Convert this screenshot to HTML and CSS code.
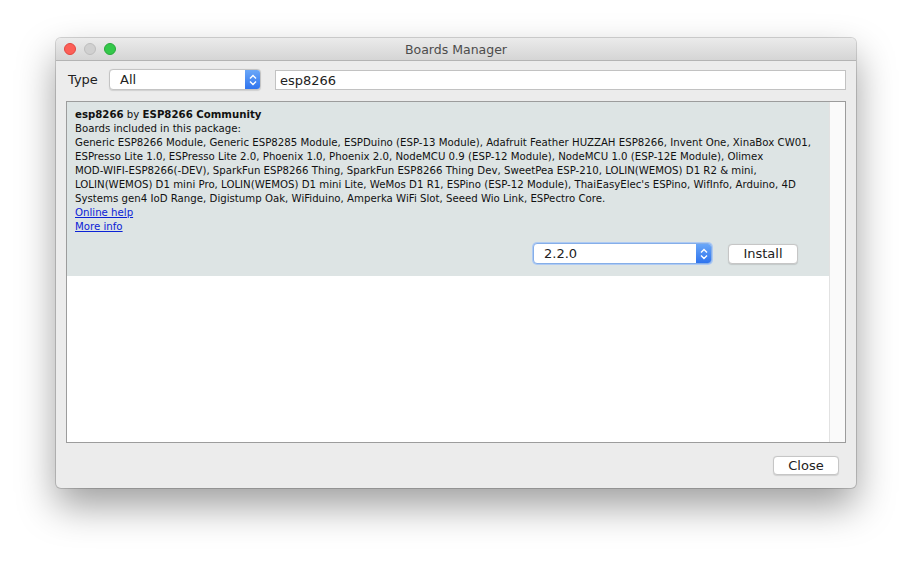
FILE: index.html
```html
<!DOCTYPE html>
<html>
<head>
<meta charset="utf-8">
<link rel="stylesheet" href="styles.css">
</head>
<body>
<div class="desk">
  <div class="window">
    <div class="titlebar">
      <div class="lights">
        <span class="light red"></span>
        <span class="light grey"></span>
        <span class="light green"></span>
      </div>
      <div class="title">Boards Manager</div>
    </div>
    <div class="filter">
      <span class="type-label">Type</span>
      <div class="select type-select">
        <span class="select-text">All</span>
        <span class="stepper"><svg width="10" height="14" viewBox="0 0 10 14"><path d="M2 5.5 L5 2.5 L8 5.5 M2 8.5 L5 11.5 L8 8.5" fill="none" stroke="#fff" stroke-width="1.4"/></svg></span>
      </div>
      <div class="search">esp8266</div>
    </div>
    <div class="list">
      <div class="list-inner">
        <div class="item">
          <div class="line"><b>esp8266</b> by <b>ESP8266 Community</b></div>
          <div class="line">Boards included in this package:</div>
          <div class="boards">Generic ESP8266 Module, Generic ESP8285 Module, ESPDuino (ESP-13 Module), Adafruit Feather HUZZAH ESP8266, Invent One, XinaBox CW01,<br>ESPresso Lite 1.0, ESPresso Lite 2.0, Phoenix 1.0, Phoenix 2.0, NodeMCU 0.9 (ESP-12 Module), NodeMCU 1.0 (ESP-12E Module), Olimex<br>MOD-WIFI-ESP8266(-DEV), SparkFun ESP8266 Thing, SparkFun ESP8266 Thing Dev, SweetPea ESP-210, LOLIN(WEMOS) D1 R2 &amp; mini,<br>LOLIN(WEMOS) D1 mini Pro, LOLIN(WEMOS) D1 mini Lite, WeMos D1 R1, ESPino (ESP-12 Module), ThaiEasyElec's ESPino, WifInfo, Arduino, 4D<br>Systems gen4 IoD Range, Digistump Oak, WiFiduino, Amperka WiFi Slot, Seeed Wio Link, ESPectro Core.</div>
          <div class="line"><a href="#">Online help</a></div>
          <div class="line"><a href="#">More info</a></div>
          <div class="actions">
            <div class="select version-select">
              <span class="select-text">2.2.0</span>
              <span class="stepper"><svg width="10" height="14" viewBox="0 0 10 14"><path d="M2 5.5 L5 2.5 L8 5.5 M2 8.5 L5 11.5 L8 8.5" fill="none" stroke="#fff" stroke-width="1.4"/></svg></span>
            </div>
            <button class="btn install">Install</button>
          </div>
        </div>
      </div>
      <div class="scroll"></div>
    </div>
    <div class="footer">
      <button class="btn close">Close</button>
    </div>
  </div>
</div>
</body>
</html>
```

FILE: styles.css
```css
html, body {
  margin: 0;
  padding: 0;
  background: #ffffff;
  font-family: "DejaVu Sans", "Liberation Sans", sans-serif;
}
.desk {
  padding: 38px 0 74px 56px;
}
.window {
  width: 800px;
  height: 450px;
  background: #ececec;
  border-radius: 5px;
  box-shadow: 0 0 0 1px rgba(0,0,0,0.16), 0 18px 38px rgba(0,0,0,0.38);
  display: flex;
  flex-direction: column;
  overflow: hidden;
}
.titlebar {
  height: 22px;
  flex: none;
  background: linear-gradient(#ebebeb, #d5d5d5);
  border-bottom: 1px solid #b4b4b4;
  display: flex;
  align-items: center;
  position: relative;
}
.lights {
  display: flex;
  gap: 8px;
  padding-left: 8px;
}
.light {
  width: 12px;
  height: 12px;
  border-radius: 50%;
  box-sizing: border-box;
}
.red { background: #fc5f57; border: 0.5px solid #e2463f; }
.grey { background: #d0d0d0; border: 0.5px solid #bdbdbd; }
.green { background: #34c84a; border: 0.5px solid #28a83b; }
.title {
  position: absolute;
  left: 0;
  right: 0;
  text-align: center;
  font-size: 12.5px;
  color: #4c4c4c;
  pointer-events: none;
}
.filter {
  height: 40px;
  flex: none;
  display: flex;
  align-items: flex-start;
  padding: 0 10px 0 12px;
  box-sizing: border-box;
}
.type-label {
  font-size: 13px;
  color: #222;
  width: 41px;
  margin-top: 11px;
}
.select {
  display: flex;
  align-items: center;
  background: #fff;
  border: 1px solid #c4c4c4;
  border-radius: 4px;
  box-sizing: border-box;
  overflow: hidden;
  box-shadow: 0 0.5px 1px rgba(0,0,0,0.12);
}
.type-select {
  width: 152px;
  height: 21px;
  margin-top: 8px;
}
.select-text {
  flex: 1;
  font-size: 13px;
  color: #222;
  padding-left: 10px;
}
.stepper {
  width: 15px;
  align-self: stretch;
  background: linear-gradient(#6aa7f8, #2f74ee);
  display: flex;
  align-items: center;
  justify-content: center;
}
.search {
  margin: 9px 0 0 14px;
  flex: 1;
  height: 20px;
  background: #fff;
  border: 1px solid #c2c2c2;
  box-sizing: border-box;
  font-size: 13px;
  color: #222;
  padding-left: 4px;
  line-height: 19px;
}
.list {
  margin: 0 10px;
  height: 342px;
  flex: none;
  border: 1px solid #9c9c9c;
  box-sizing: border-box;
  background: #fff;
  display: flex;
}
.list-inner {
  flex: 1;
  min-width: 0;
  overflow: hidden;
}
.scroll {
  width: 15px;
  flex: none;
  background: #fafafa;
  border-left: 1px solid #e2e2e2;
}
.item {
  background: #dde4e4;
  height: 174px;
  padding: 6px 0 0 8px;
  box-sizing: border-box;
  font-size: 10.2px;
  line-height: 14px;
  color: #111;
}
.boards {
  white-space: nowrap;
}
.item a {
  color: #0b22d6;
}
.actions {
  display: flex;
  justify-content: flex-end;
  align-items: center;
  padding-right: 31px;
  margin-top: 9px;
  gap: 16px;
}
.version-select {
  width: 179px;
  height: 21px;
  border-color: #85aee8;
  box-shadow: 0 0 0 1px #aecaf3;
}
.btn {
  font-family: inherit;
  font-size: 13px;
  color: #222;
  background: #fff;
  border: 1px solid #c6c6c6;
  border-radius: 4px;
  box-shadow: 0 0.5px 1px rgba(0,0,0,0.12);
  padding: 0;
}
.install {
  width: 70px;
  height: 20px;
}
.footer {
  display: flex;
  justify-content: flex-end;
  padding: 13px 17px 0 0;
}
.close {
  width: 66px;
  height: 19px;
}
```
